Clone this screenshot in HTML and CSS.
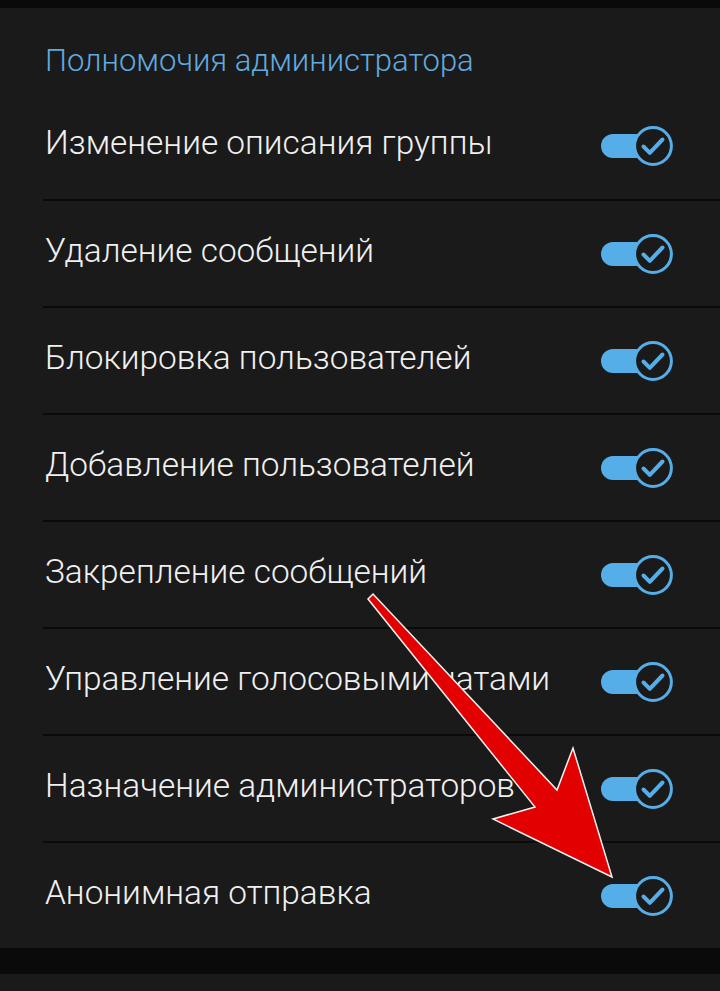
FILE: index.html
```html
<!DOCTYPE html>
<html lang="ru">
<head>
  <meta charset="UTF-8" />
  <meta name="viewport" content="width=device-width, initial-scale=1.0"/>
  <title>Права администратора</title>
  <link rel="stylesheet" href="styles.css">
</head>
<body>
  <div class="top-strip"></div>

  <section class="panel">
    <h2 class="panel-title">Полномочия администратора</h2>

    <ul class="perm-list">
      <li class="perm-row"><span class="label">Изменение описания группы</span><span class="toggle"></span></li>
      <li class="perm-row"><span class="label">Удаление сообщений</span><span class="toggle"></span></li>
      <li class="perm-row"><span class="label">Блокировка пользователей</span><span class="toggle"></span></li>
      <li class="perm-row"><span class="label">Добавление пользователей</span><span class="toggle"></span></li>
      <li class="perm-row"><span class="label">Закрепление сообщений</span><span class="toggle"></span></li>
      <li class="perm-row"><span class="label">Управление голосовыми чатами</span><span class="toggle"></span></li>
      <li class="perm-row"><span class="label">Назначение администраторов</span><span class="toggle"></span></li>
      <li class="perm-row"><span class="label">Анонимная отправка</span><span class="toggle"></span></li>
    </ul>
  </section>

  <div class="gap-strip"></div>
  <section class="panel panel-next"></section>

  <!-- pointer drawn on top of the screenshot -->
  <svg class="arrow" width="720" height="991" viewBox="0 0 720 991">
    <polygon points="368,599 373,594 557,790 573,748 612,877 493,819 535,807"
             fill="#e30000" stroke="#f2f2f2" stroke-width="1.5" stroke-linejoin="miter"/>
  </svg>

  <script>
    // same knob markup for every switch
    var knob = '<svg class="knob" width="40" height="40" viewBox="0 0 40 40">' +
      '<circle cx="20" cy="20" r="18.4" fill="#1a1a1a" stroke="#56aee8" stroke-width="3"/>' +
      '<path d="M10.5 20.5 L16.8 26.8 L29.5 13.5" fill="none" stroke="#56aee8" stroke-width="4" stroke-linecap="round" stroke-linejoin="round"/>' +
      '</svg>';
    document.querySelectorAll('.toggle').forEach(function (t) {
      t.innerHTML = '<span class="track"></span>' + knob;
    });
  </script>
</body>
</html>
```

FILE: styles.css
```css
* {
  box-sizing: border-box;
}

body {
  margin: 0;
  background: #0a0a0a;
  font-family: Roboto, 'Noto Sans', sans-serif;
  overflow: hidden;
}

.top-strip {
  height: 8px;
}

.panel {
  background: #1a1a1a;
}

.panel-title {
  margin: 0;
  height: 84px;
  padding: 20px 0 0 45px;
  display: flex;
  align-items: center;
  font-size: 31px;
  font-weight: 300;
  color: #62a9df;
}

.perm-list {
  list-style: none;
  margin: 0 0 0 43px;
  padding: 0;
}

.perm-row {
  height: 107px;
  display: flex;
  align-items: center;
  justify-content: space-between;
  padding: 0 47px 0 2px;
  border-top: 2px solid #0a0a0a;
  font-size: 33.4px;
  font-weight: 300;
  color: #f0f0f0;
}

.perm-row:first-child {
  border-top: none;
}

.label {
  padding-bottom: 6px;
}

.toggle {
  position: relative;
  width: 72px;
  height: 40px;
  display: flex;
  align-items: center;
}

.toggle .track {
  width: 50px;
  height: 24px;
  border-radius: 12px;
  background: #56aee8;
}

.toggle .knob {
  position: absolute;
  right: 0;
  top: 0;
}

.gap-strip {
  height: 26px;
}

.panel-next {
  height: 40px;
}

.arrow {
  position: absolute;
  left: 0;
  top: 0;
  pointer-events: none;
}
```
